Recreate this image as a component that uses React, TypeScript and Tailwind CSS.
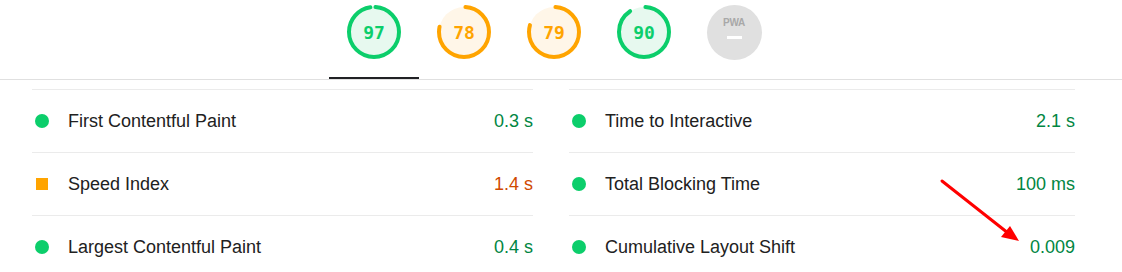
import React from "react";

type Tone = "pass" | "average";

const gaugeTone: Record<Tone, { stroke: string; fill: string; text: string }> = {
  pass: { stroke: "#0cce6b", fill: "#e7f9ef", text: "#0cce6b" },
  average: { stroke: "#ffa400", fill: "#fff6e8", text: "#ffa400" },
};

function Gauge({ score, tone }: { score: number; tone: Tone }) {
  const r = 25;
  const c = 2 * Math.PI * r;
  const t = gaugeTone[tone];
  const len = (score / 100) * c;
  return (
    <div className="relative h-[56px] w-[56px]">
      <svg width="56" height="56" viewBox="0 0 56 56" className="-rotate-90">
        <circle cx="28" cy="28" r={r} fill={t.fill} />
        <circle
          cx="28"
          cy="28"
          r={r}
          fill="none"
          stroke={t.stroke}
          strokeWidth="4"
          strokeLinecap="round"
          strokeDasharray={`${len - 1.5} ${c}`}
          strokeDashoffset={-1.5}
        />
      </svg>
      <span
        className="absolute inset-0 flex items-center justify-center text-[18px] font-bold"
        style={{ color: t.text, fontFamily: '"DejaVu Sans Mono", "Liberation Mono", monospace' }}
      >
        {score}
      </span>
    </div>
  );
}

function PwaBadge() {
  return (
    <div className="flex h-[55px] w-[55px] flex-col items-center rounded-full bg-[#e0e0e0] pt-[12px]">
      <span className="text-[10px] font-bold leading-[12px] tracking-tight text-[#a8a8a8]">PWA</span>
      <span className="mt-[7px] h-[3px] w-[15px] bg-white" />
    </div>
  );
}

type Metric = { label: string; value: string; tone: Tone };

const left: Metric[] = [
  { label: "First Contentful Paint", value: "0.3 s", tone: "pass" },
  { label: "Speed Index", value: "1.4 s", tone: "average" },
  { label: "Largest Contentful Paint", value: "0.4 s", tone: "pass" },
];

const right: Metric[] = [
  { label: "Time to Interactive", value: "2.1 s", tone: "pass" },
  { label: "Total Blocking Time", value: "100 ms", tone: "pass" },
  { label: "Cumulative Layout Shift", value: "0.009", tone: "pass" },
];

function MetricRow({ m }: { m: Metric }) {
  return (
    <div className="flex h-[63px] items-center border-t border-[#ebebeb] pl-[3px]">
      <div className="flex h-[14px] w-[14px] items-center justify-center">
        {m.tone === "pass" ? (
          <span className="h-[14px] w-[14px] rounded-full bg-[#0cce6b]" />
        ) : (
          <span className="h-[12px] w-[12px] bg-[#ffa400]" />
        )}
      </div>
      <span className="ml-[19px] flex-1 text-[#212121]">{m.label}</span>
      <span className={m.tone === "pass" ? "text-[#018642]" : "text-[#d04900]"}>{m.value}</span>
    </div>
  );
}

export default function App() {
  const scores: { score: number; tone: Tone }[] = [
    { score: 97, tone: "pass" },
    { score: 78, tone: "average" },
    { score: 79, tone: "average" },
    { score: 90, tone: "pass" },
  ];

  return (
    <div
      className="relative h-[272px] w-[1122px] overflow-hidden bg-white text-[18px]"
      style={{ fontFamily: '"Liberation Sans", Arial, sans-serif' }}
    >
      {/* gauges / tabs */}
      <div className="flex h-[80px] border-b border-[#e0e0e0] pl-[329px]">
        {scores.map((s, i) => (
          <div
            key={i}
            className={`flex h-[79px] w-[90px] justify-center pt-[4px] ${
              i === 0 ? "border-b-2 border-[#202124]" : ""
            }`}
          >
            <Gauge score={s.score} tone={s.tone} />
          </div>
        ))}
        <div className="flex h-[79px] w-[90px] justify-center pt-[5px]">
          <PwaBadge />
        </div>
      </div>

      {/* metrics */}
      <div className="flex gap-[36px] pl-[32px] pt-[9px]">
        <div className="w-[501px]">
          {left.map((m) => (
            <MetricRow key={m.label} m={m} />
          ))}
        </div>
        <div className="w-[506px]">
          {right.map((m) => (
            <MetricRow key={m.label} m={m} />
          ))}
        </div>
      </div>

      {/* annotation arrow */}
      <svg className="pointer-events-none absolute left-0 top-0" width="1122" height="272">
        <line x1="942" y1="181" x2="1008" y2="233" stroke="#ff0000" strokeWidth="3" strokeLinecap="round" />
        <polygon points="1019,241 1001,237 1010,226" fill="#ff0000" />
      </svg>
    </div>
  );
}
